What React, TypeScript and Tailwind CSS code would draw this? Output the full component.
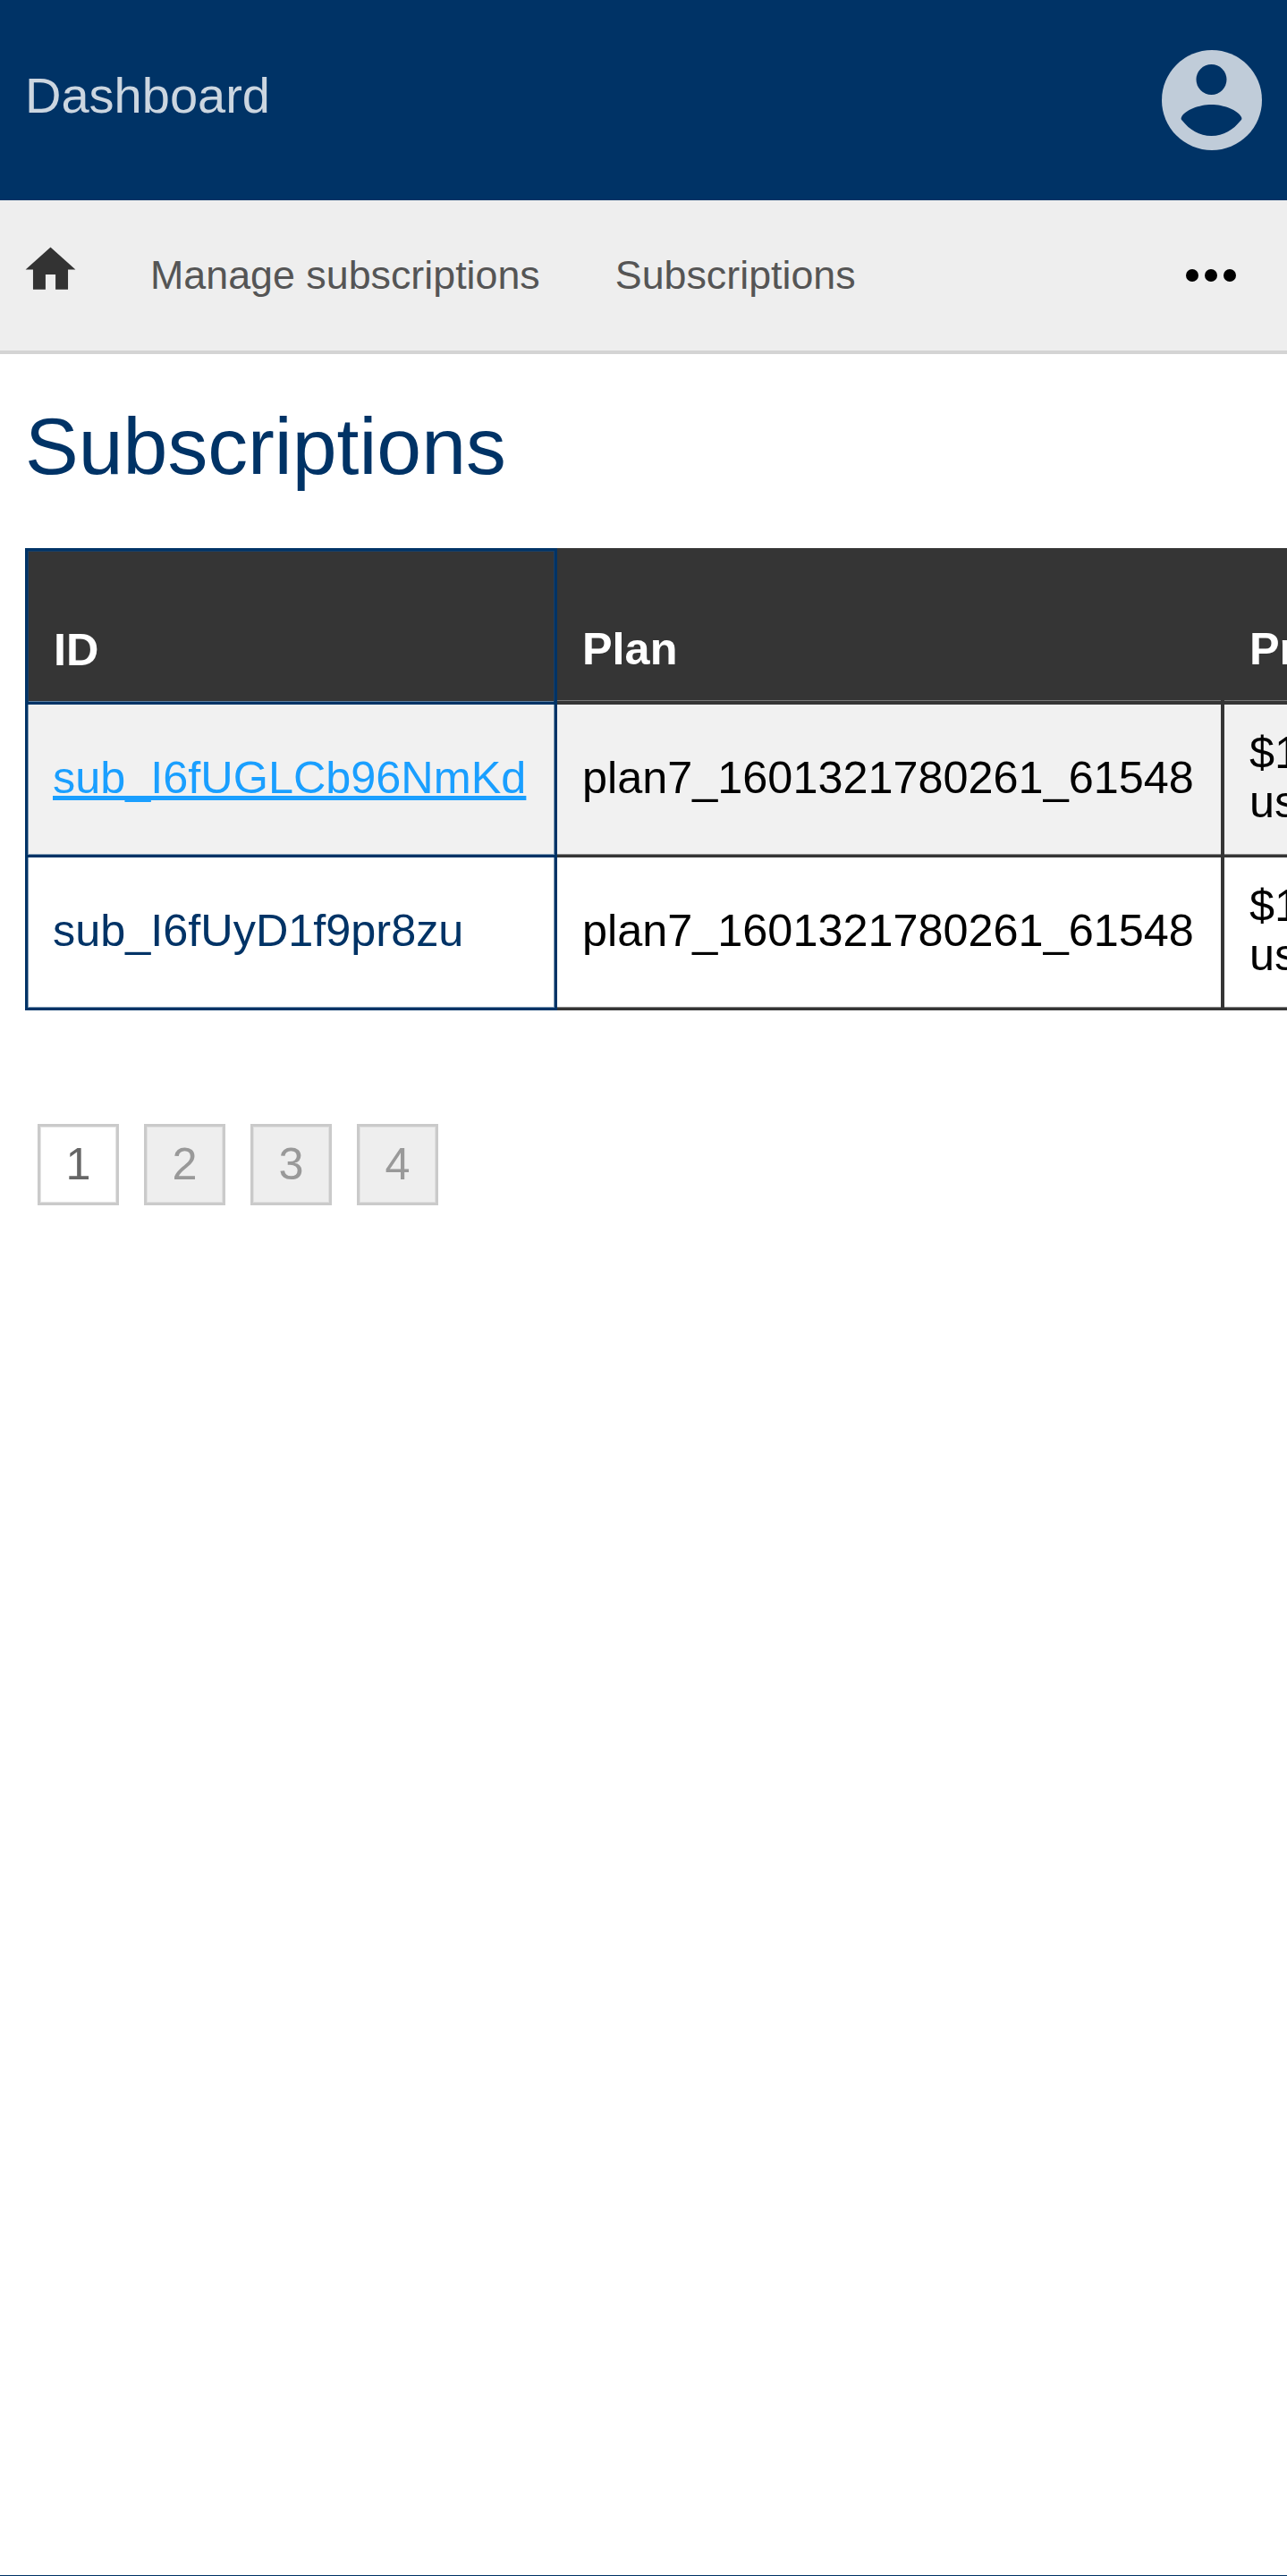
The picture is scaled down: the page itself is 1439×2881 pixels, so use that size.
const sans = "font-['Liberation_Sans',Arial,sans-serif]";

function Avatar() {
  return (
    <svg width="112" height="112" viewBox="0 0 112 112" className="shrink-0">
      <circle cx="56" cy="56" r="56" fill="#c0ccd9" />
      <circle cx="55.5" cy="33" r="17" fill="#003366" />
      <path d="M22 75 C26 67 42 61 55.5 61 C69 61 85 67 89 75 C90 77 89 78 88 79 C80 89 69 96 55.5 96 C42 96 31 89 23 79 C22 78 21 77 22 75 Z" fill="#003366" />
    </svg>
  );
}

function HomeIcon() {
  return (
    <svg width="67" height="67" viewBox="0 0 24 24" fill="#333333" className="mb-[14px] shrink-0">
      <path d="M10 20v-6h4v6h5v-8h3L12 3 2 12h3v8z" />
    </svg>
  );
}

const rows = [
  { id: "sub_I6fUGLCb96NmKd", link: true, plan: "plan7_1601321780261_61548", price: "$19.99 usd" },
  { id: "sub_I6fUyD1f9pr8zu", link: false, plan: "plan7_1601321780261_61548", price: "$19.99 usd" },
];

export default function App() {
  return (
    <div className={`${sans} flex min-h-[2881px] flex-col overflow-hidden bg-white`}>
      <header className="flex h-[224px] items-center justify-between bg-[#003366] pl-[28px] pr-[28px]">
        <span className="mb-[10px] text-[56px] text-[#ccd6e0]">Dashboard</span>
        <Avatar />
      </header>

      <nav className="flex h-[172px] items-center border-b-[4px] border-[#d4d4d4] bg-[#eeeeee] pl-[23px] pr-[57px] text-[44.8px] text-[#555555]">
        <HomeIcon />
        <span className="ml-[78px]">Manage subscriptions</span>
        <span className="ml-[84px]">Subscriptions</span>
        <div className="ml-auto flex gap-[7px]">
          <span className="h-[14px] w-[14px] rounded-full bg-black" />
          <span className="h-[14px] w-[14px] rounded-full bg-black" />
          <span className="h-[14px] w-[14px] rounded-full bg-black" />
        </div>
      </nav>

      <main className="pl-[28px]">
        <h1 className="mt-[49px] text-[89.6px] leading-[108px] text-[#003366]">Subscriptions</h1>

        <div className="mt-[60px] overflow-hidden">
          <table className="w-[1800px] table-fixed border-separate border-spacing-0 text-left text-[50.4px] leading-[55px] text-black">
            <thead>
              <tr className="bg-[#353535] text-white">
                <th className="h-[175px] w-[595px] border-[3px] border-[#003366] px-[29px] pb-[31px] align-bottom font-bold shadow-[inset_1px_0_0_#1a3f66,inset_-1px_0_0_#1a3f66,inset_0_1px_0_#1a3f66,inset_0_-1px_0_#5f7f9f]">ID</th>
                <th className="w-[746px] border-r-[4px] border-b-[4px] border-[#353535] px-[28px] pb-[31px] align-bottom font-bold shadow-[inset_0_-1px_0_#777777]">Plan</th>
                <th className="border-b-[4px] border-[#353535] px-[28px] pb-[31px] align-bottom font-bold shadow-[inset_0_-1px_0_#777777]">Price</th>
              </tr>
            </thead>
            <tbody>
              {rows.map((row) => (
                <tr key={row.id} className={row.link ? "bg-[#f1f1f1]" : "bg-white"}>
                  <td className="h-[171px] border-x-[3px] border-b-[3px] border-[#003366] px-[28px] pb-[6px] whitespace-nowrap text-[#003366] shadow-[inset_1px_0_0_#7f99b3,inset_-1px_0_0_#7f99b3,inset_0_-1px_0_#7f99b3]">
                    {row.link ? <a href="#" className="text-[#1a9fff] underline">{row.id}</a> : row.id}
                  </td>
                  <td className="border-r-[4px] border-b-[3px] border-[#353535] px-[28px] pb-[6px] whitespace-nowrap shadow-[inset_0_-1px_0_#888888]">{row.plan}</td>
                  <td className="border-b-[3px] border-[#353535] px-[28px] pb-[6px] shadow-[inset_0_-1px_0_#888888]">
                    <span className="block w-[120px]">{row.price}</span>
                  </td>
                </tr>
              ))}
            </tbody>
          </table>
        </div>

        <div className="mt-[127px] ml-[14px] flex gap-[28px] text-[50.4px]">
          {["1", "2", "3", "4"].map((n) => (
            <span
              key={n}
              className={
                n === "1"
                  ? "flex h-[91px] w-[91px] items-center justify-center border-[3px] border-[#cacaca] bg-white pb-[2px] text-[#666666] shadow-[inset_0_0_0_1px_#e4e4e4]"
                  : "flex h-[91px] w-[91px] items-center justify-center border-[3px] border-[#cacaca] bg-[#eeeeee] pb-[2px] text-[#999999] shadow-[inset_0_0_0_1px_#e0e0e0]"
              }
            >
              {n}
            </span>
          ))}
        </div>
      </main>

      <footer className="mt-auto h-px bg-[#003366]" />
    </div>
  );
}
